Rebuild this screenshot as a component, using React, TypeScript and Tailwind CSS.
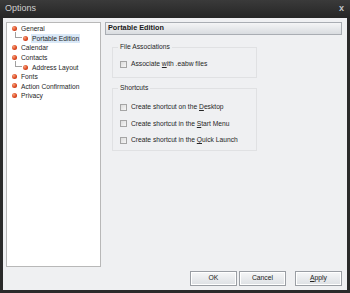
import React from "react";

const font = { fontFamily: '"Liberation Sans", Arial, sans-serif' };

function Bullet() {
  return (
    <span className="inline-block w-[5px] h-[5px] rounded-full shrink-0 bg-[radial-gradient(circle_at_35%_35%,#f7a27a,#d9411b_60%,#a32a0c)]" />
  );
}

function TreeItem({ label, child, selected }: { label: string; child?: boolean; selected?: boolean }) {
  return (
    <div className="flex items-center h-[9.6px] relative">
      {child ? (
        <>
          <span className="w-[7px] shrink-0" />
          <span className="w-[7px] h-[6px] border-l border-b border-[#a0a0a0] -mt-[6px] shrink-0" />
          <span className="ml-[1px] flex items-center">
            <Bullet />
          </span>
          <span className={`ml-[3px] px-[1px] leading-[9px] ${selected ? "bg-[#d9e8f7]" : ""}`}>{label}</span>
        </>
      ) : (
        <>
          <span className="ml-[4px]"><Bullet /></span>
          <span className="ml-[4px] leading-[9px]">{label}</span>
        </>
      )}
    </div>
  );
}

function Check({ children }: { children: React.ReactNode }) {
  return (
    <div className="flex items-center h-[16.5px]">
      <span className="w-[7px] h-[7px] border border-[#a5a5a5] bg-gradient-to-br from-[#dcdcdc] to-[#f6f6f6] shrink-0" />
      <span className="ml-[4px]">{children}</span>
    </div>
  );
}

function Btn({ children }: { children: React.ReactNode }) {
  return (
    <div className="w-[47px] h-[15px] border border-[#9a9ea4] bg-gradient-to-b from-[#f6f7f8] to-[#dde0e4] flex items-center justify-center text-[6.8px] text-[#222] shadow-[inset_0_0_0_1px_#ffffff]">
      {children}
    </div>
  );
}

export default function App() {
  return (
    <div className="w-[350px] h-[293px] bg-[#2a2a2a] flex flex-col text-[#262626]" style={font}>
      <div className="h-[18px] flex items-center justify-between px-[5px] bg-gradient-to-b from-[#3a3a3a] to-[#262626]">
        <span className="text-[9px] text-[#d0d0d0]">Options</span>
        <span className="text-[9px] font-bold text-[#bfc3c8] mr-[1px]">x</span>
      </div>
      <div className="flex-1 mx-[3px] mb-[3px] bg-[#eff0f2] flex flex-col text-[6.7px]">
        <div className="flex mt-[4px] ml-[3px]">
          <div className="w-[95px] h-[245px] bg-white border border-[#b8b8b8] pt-[1px] pl-[1px]">
            <TreeItem label="General" />
            <TreeItem label="Portable Edition" child selected />
            <TreeItem label="Calendar" />
            <TreeItem label="Contacts" />
            <TreeItem label="Address Layout" child />
            <TreeItem label="Fonts" />
            <TreeItem label="Action Confirmation" />
            <TreeItem label="Privacy" />
          </div>
          <div className="ml-[4px] w-[237px] flex flex-col">
            <div className="h-[13px] border border-[#a9adb3] bg-gradient-to-b from-[#f4f5f6] to-[#d9dce0] flex items-center pl-[2px] font-bold text-[7.3px] text-[#1a1a1a]">
              Portable Edition
            </div>
            <fieldset className="mt-[8px] ml-[7px] w-[145px] h-[35px] border border-[#e0e1e3] px-[7px] pt-0">
              <legend className="ml-[-2px] px-[2px] leading-[8px]">File Associations</legend>
              <div className="mt-[5px]">
                <Check>
                  Associate <span className="underline">w</span>ith .eabw files
                </Check>
              </div>
            </fieldset>
            <fieldset className="mt-[6px] ml-[7px] w-[145px] h-[67px] border border-[#e0e1e3] px-[7px] pt-0">
              <legend className="ml-[-2px] px-[2px] leading-[8px]">Shortcuts</legend>
              <div className="mt-[7px] flex flex-col">
                <Check>
                  Create shortcut on the <span className="underline">D</span>esktop
                </Check>
                <Check>
                  Create shortcut in the <span className="underline">S</span>tart Menu
                </Check>
                <Check>
                  Create shortcut in the <span className="underline">Q</span>uick Launch
                </Check>
              </div>
            </fieldset>
          </div>
        </div>
        <div className="flex justify-end mt-[4px] mr-[5px] gap-[2px]">
          <Btn>OK</Btn>
          <Btn>Cancel</Btn>
          <div className="ml-[7px]">
            <Btn>
              <span className="underline">A</span>pply
            </Btn>
          </div>
        </div>
      </div>
    </div>
  );
}
